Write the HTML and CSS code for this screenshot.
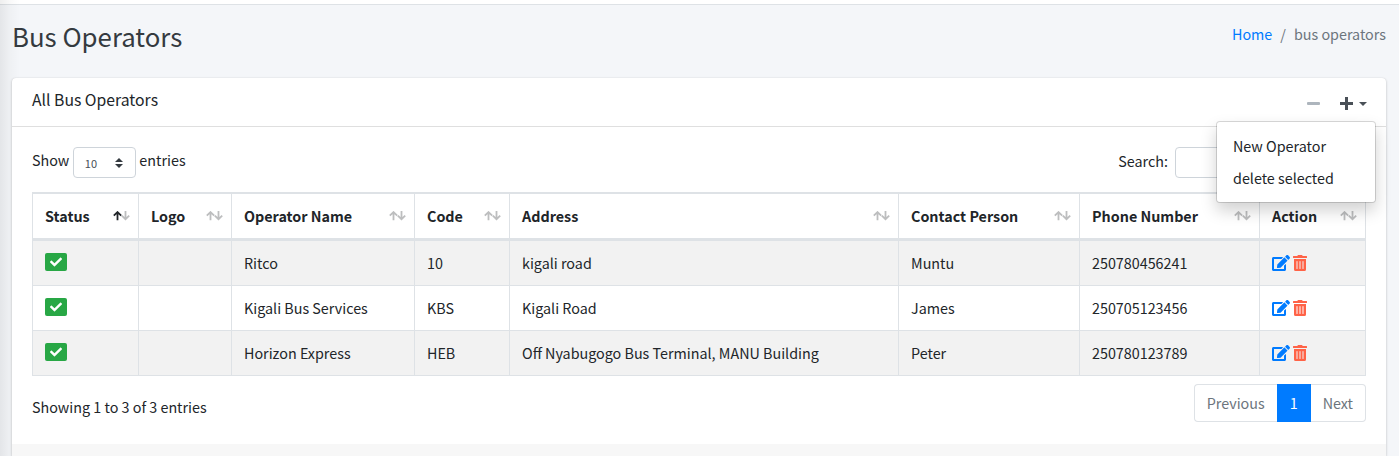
FILE: index.html
```html
<!DOCTYPE html>
<html lang="en">
<head>
<meta charset="utf-8">
<title>Bus Operators</title>
<link rel="stylesheet" href="styles.css">
</head>
<body>
<svg width="0" height="0" class="sprite">
  <symbol id="check" viewBox="0 0 512 512"><path fill="currentColor" d="M173.898 439.404l-166.4-166.4c-9.997-9.997-9.997-26.206 0-36.204l36.203-36.204c9.997-9.998 26.207-9.998 36.204 0L192 312.69 432.095 72.596c9.997-9.997 26.207-9.997 36.204 0l36.203 36.204c9.997 9.997 9.997 26.206 0 36.204l-294.4 294.401c-9.998 9.997-26.207 9.997-36.204-.001z"/></symbol>
  <symbol id="edit" viewBox="0 0 576 512"><path fill="currentColor" d="M402.6 83.2l90.2 90.2c3.8 3.8 3.8 10 0 13.8L274.4 405.6l-92.8 10.3c-12.4 1.4-22.9-9.1-21.5-21.5l10.3-92.8L388.8 83.2c3.8-3.8 10-3.8 13.8 0zm162-22.9l-48.8-48.8c-15.2-15.2-39.9-15.2-55.2 0l-35.4 35.4c-3.8 3.8-3.8 10 0 13.8l90.2 90.2c3.8 3.8 10 3.8 13.8 0l35.4-35.4c15.2-15.3 15.2-40 0-55.2zM384 346.2V448H64V128h229.8c3.2 0 6.2-1.3 8.5-3.5l40-40c7.6-7.6 2.2-20.5-8.5-20.5H48C21.5 64 0 85.500 0 112v352c0 26.500 21.500 48 48 48h352c26.500 0 48-21.500 48-48V306.200c0-10.700-12.900-16-20.500-8.500l-40 40c-2.200 2.300-3.500 5.300-3.500 8.500z"/></symbol>
  <symbol id="trash" viewBox="0 0 448 512"><path fill="currentColor" d="M32 464a48 48 0 0 0 48 48h288a48 48 0 0 0 48-48V128H32zm272-256a16 16 0 0 1 32 0v224a16 16 0 0 1-32 0zm-96 0a16 16 0 0 1 32 0v224a16 16 0 0 1-32 0zm-96 0a16 16 0 0 1 32 0v224a16 16 0 0 1-32 0zM432 32H312l-9.400-18.700A24 24 0 0 0 281.100 0H166.800a23.700 23.700 0 0 0-21.400 13.300L136 32H16A16 16 0 0 0 0 48v32a16 16 0 0 0 16 16h416a16 16 0 0 0 16-16V48a16 16 0 0 0-16-16z"/></symbol>
  <symbol id="sort" viewBox="0 0 17 10"><path style="stroke: var(--down)" d="M12.500 0v8M8.800 4.600l3.700 3.600 3.700-3.600"/><path style="stroke: var(--up)" d="M4.500 9.300V1.200M.8 4.700l3.700-3.600 3.700 3.600"/></symbol>
</svg>
<div class="navbar"></div>
<main class="content">
  <header class="page-head">
    <h1>Bus Operators</h1>
    <nav class="crumbs"><a>Home</a><span class="sep">/</span><span>bus operators</span></nav>
  </header>
  <section class="card">
    <div class="card-head">
      <h3>All Bus Operators</h3>
      <div class="tools">
        <i class="minus"></i>
        <i class="plus"></i>
        <i class="caret"></i>
      </div>
      <div class="menu"><a>New Operator</a><a>delete selected</a></div>
    </div>
    <div class="card-body">
      <div class="controls">
        <label class="length">Show
          <span class="select">10<svg width="8" height="10" viewBox="0 0 4 5"><path fill="#343a40" d="M2 0L0 2h4zm0 5L0 3h4z"/></svg></span>
          entries</label>
        <label class="search">Search:<input type="text"></label>
      </div>
      <table>
        <colgroup><col class="c1"><col class="c2"><col class="c3"><col class="c4"><col class="c5"><col class="c6"><col class="c7"><col class="c8"></colgroup>
        <thead><tr>
          <th><div class="th active">Status<svg><use href="#sort"/></svg></div></th>
          <th><div class="th">Logo<svg><use href="#sort"/></svg></div></th>
          <th><div class="th">Operator Name<svg><use href="#sort"/></svg></div></th>
          <th><div class="th">Code<svg><use href="#sort"/></svg></div></th>
          <th><div class="th">Address<svg><use href="#sort"/></svg></div></th>
          <th><div class="th">Contact Person<svg><use href="#sort"/></svg></div></th>
          <th><div class="th">Phone Number<svg><use href="#sort"/></svg></div></th>
          <th><div class="th">Action<svg><use href="#sort"/></svg></div></th>
        </tr></thead>
        <tbody>
          <tr><td><span class="badge"><svg><use href="#check"/></svg></span></td><td></td><td>Ritco</td><td>10</td><td>kigali road</td><td>Muntu</td><td>250780456241</td><td><div class="actions"><svg class="edit"><use href="#edit"/></svg><svg class="trash"><use href="#trash"/></svg></div></td></tr>
          <tr><td><span class="badge"><svg><use href="#check"/></svg></span></td><td></td><td>Kigali Bus Services</td><td>KBS</td><td>Kigali Road</td><td>James</td><td>250705123456</td><td><div class="actions"><svg class="edit"><use href="#edit"/></svg><svg class="trash"><use href="#trash"/></svg></div></td></tr>
          <tr><td><span class="badge"><svg><use href="#check"/></svg></span></td><td></td><td>Horizon Express</td><td>HEB</td><td>Off Nyabugogo Bus Terminal, MANU Building</td><td>Peter</td><td>250780123789</td><td><div class="actions"><svg class="edit"><use href="#edit"/></svg><svg class="trash"><use href="#trash"/></svg></div></td></tr>
        </tbody>
      </table>
      <div class="foot">
        <div class="info">Showing 1 to 3 of 3 entries</div>
        <div class="pages"><a>Previous</a><a class="current">1</a><a>Next</a></div>
      </div>
    </div>
    <div class="card-foot"></div>
  </section>
</main>
</body>
</html>
```
FILE: styles.css
```css
* { box-sizing: border-box; }
body {
  margin: 0;
  height: 456px;
  overflow: hidden;
  background: #f4f6f9;
  color: #212529;
  font: 14.33px/24px "Noto Sans CJK SC", "Open Sans", sans-serif;
}
/* shadow cast by the sidebar */
body::before {
  content: "";
  position: absolute;
  left: 0;
  top: 0;
  width: 20px;
  height: 456px;
  background: linear-gradient(90deg, rgba(0,0,0,.065), rgba(0,0,0,.025) 50%, rgba(0,0,0,0));
}
.sprite { display: block; }
.navbar { height: 5px; background: #fff; border-bottom: 1px solid #dee2e6; }
.content { padding: 0 13px 0 12px; }
.page-head { display: flex; justify-content: space-between; height: 73px; padding-top: 13px; }
h1 { margin: 0; font-size: 25.8px; line-height: 35px; font-weight: 400; color: #343a40; }
.crumbs { display: flex; gap: 8px; padding-top: 4px; color: #6c757d; }
.crumbs a { color: #007bff; }
.card {
  position: relative;
  height: 378px;
  background: #fff;
  border-radius: 4px 4px 0 0;
  box-shadow: 0 0 1px rgba(0,0,0,.125), 0 1px 3px rgba(0,0,0,.2);
}
.card-head {
  position: relative;
  display: flex;
  justify-content: space-between;
  height: 49px;
  padding: 10px 19px 0 20px;
  border-bottom: 1px solid rgba(0,0,0,.125);
}
h3 { margin: 0; font-size: 15.76px; line-height: 24px; font-weight: 400; }
.tools { display: flex; align-items: center; height: 31px; }
.minus { width: 13px; height: 3px; border-radius: 1px; background: #adb5bd; }
.plus {
  width: 13px;
  height: 13px;
  margin: 0 6px 0 20px;
  background: linear-gradient(#495057, #495057) center/13px 3px no-repeat, linear-gradient(#495057, #495057) center/3px 13px no-repeat;
}
.caret { border: 4px solid transparent; border-top-color: #495057; border-bottom: 0; }
.menu {
  position: absolute;
  right: 10px;
  top: 43px;
  width: 160px;
  height: 82px;
  padding: 8px 0;
  background: #fff;
  background-clip: padding-box;
  border: 1px solid rgba(0,0,0,.15);
  border-radius: 4px;
  box-shadow: 0 8px 16px rgba(0,0,0,.175);
  z-index: 3;
}
.menu a { display: block; height: 32px; padding: 4px 16px; }
.card-body { height: 317px; padding: 20px 20px 0; }
.controls { display: flex; justify-content: space-between; height: 45px; }
.length { display: flex; gap: 3.5px; line-height: 26px; }
.select {
  display: flex;
  align-items: center;
  justify-content: space-between;
  width: 63px;
  height: 31px;
  padding: 0 12px 0 11px;
  border: 1px solid #ced4da;
  border-radius: 4px;
  font-size: 11px;
  color: #495057;
}
.search { display: flex; gap: 7px; line-height: 28px; }
.search input { width: 191px; height: 31px; border: 1px solid #ced4da; border-radius: 4px; }
table {
  width: 1334px;
  table-layout: fixed;
  border-collapse: separate;
  border-spacing: 0;
  border: solid #dee2e6;
  border-width: 2px 0 0 1px;
}
.c1, .c8 { width: 106px; }
.c2 { width: 93px; }
.c3 { width: 183px; }
.c4 { width: 95px; }
.c5 { width: 389px; }
.c6 { width: 181px; }
.c7 { width: 180px; }
th, td { border-right: 1px solid #dee2e6; text-align: left; padding: 0 0 0 12px; }
th { height: 47px; border-bottom: 3px solid #dee2e6; font-weight: 700; }
td { height: 45px; border-bottom: 1px solid #dee2e6; }
tbody tr:nth-child(odd) { background: #f2f2f2; }
.th {
  --up: #bdbebf;
  --down: #bdbebf;
  display: flex;
  justify-content: space-between;
  align-items: center;
  padding-right: 8px;
}
.th svg { width: 17px; height: 10px; fill: none; stroke-width: 1.8; }
.th.active { --up: #212529; }
.badge {
  display: flex;
  align-items: center;
  justify-content: center;
  width: 22px;
  height: 18px;
  margin-bottom: 3px;
  background: #28a745;
  border-radius: 2px;
  color: #fff;
}
.badge svg { width: 12px; height: 12px; }
.actions { display: flex; gap: 3px; }
.edit { width: 18px; height: 16px; color: #007bff; }
.trash { width: 14px; height: 16px; color: #ff6347; }
.foot { display: flex; justify-content: space-between; padding-top: 8px; }
.info { padding-top: 11px; }
.pages { display: flex; height: 38px; line-height: 36px; color: #6c757d; }
.pages a { border: 1px solid #dee2e6; padding: 0 12px; }
.pages a:first-child { border-right: 0; border-radius: 4px 0 0 4px; }
.pages a:last-child { border-left: 0; border-radius: 0 4px 4px 0; }
.pages .current { background: #007bff; border-color: #007bff; color: #fff; }
.card-foot { height: 12px; background: rgba(0,0,0,.03); }
```
